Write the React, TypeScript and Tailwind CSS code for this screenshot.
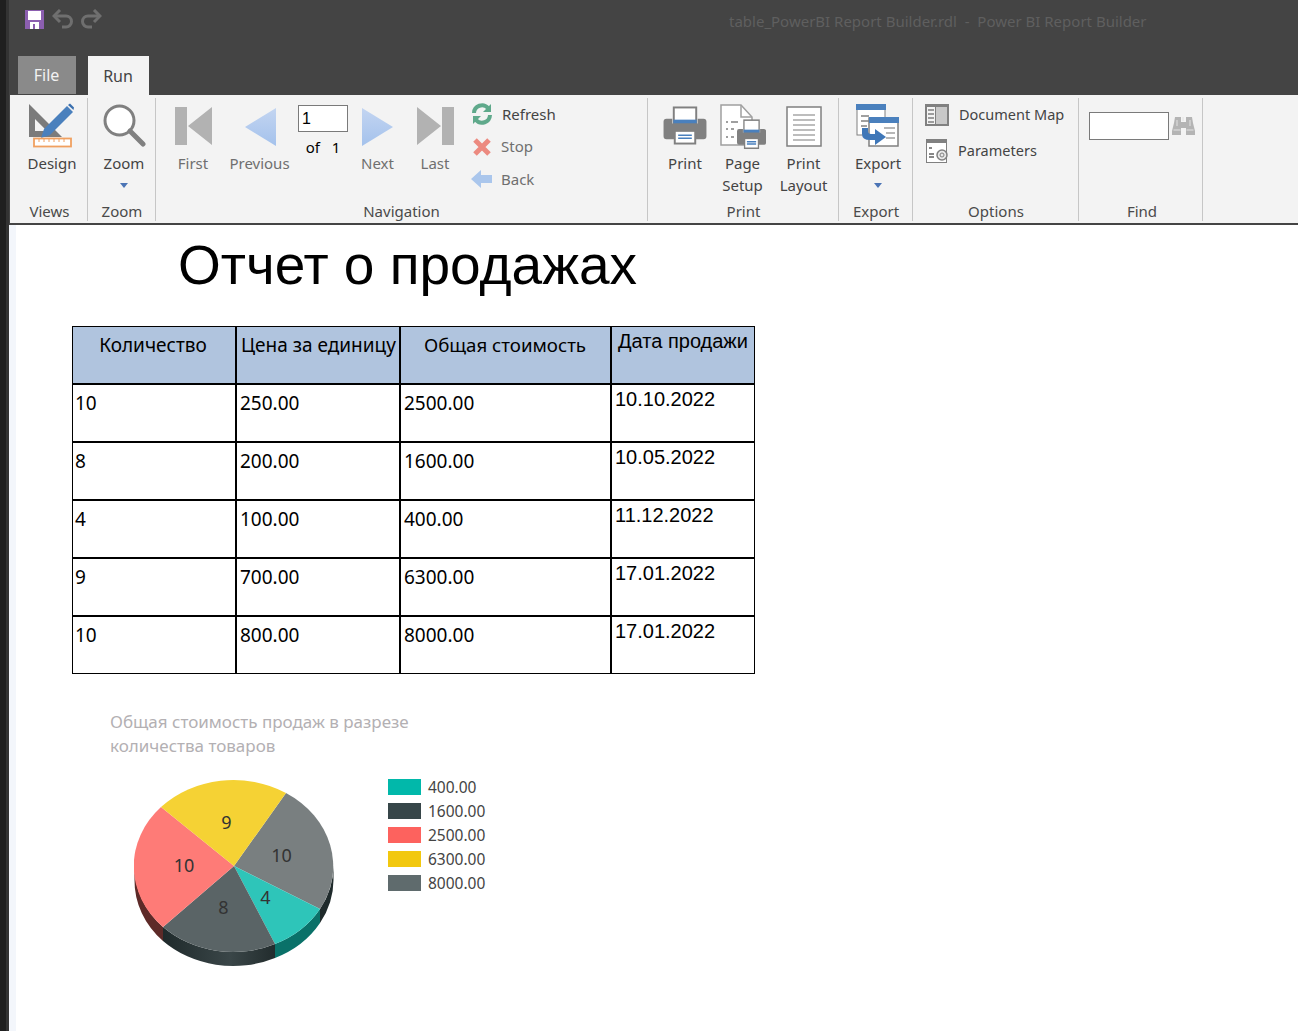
import React from "react";

const seg = { fontFamily: '"Noto Sans", "Open Sans", sans-serif' };

function RibbonGroup({ w, label, labelCls, children }: { w: string; label: string; labelCls?: string; children?: React.ReactNode }) {
  return (
    <div className={`${w} shrink-0 flex flex-col border-r border-[#c6c6c6] mt-[3px] h-[123px]`}>
      <div className="flex-1 min-h-0 flex">{children}</div>
      <div className={`h-[20px] text-center text-[15px] leading-[20px] text-[#4a4a4a] ${labelCls ?? ""}`}>{label}</div>
    </div>
  );
}

function Big({ w, icon, label, arrow, dim, cls, mb }: { w: string; icon: React.ReactNode; label: React.ReactNode; arrow?: boolean; dim?: boolean; cls?: string; mb: string }) {
  return (
    <div className={`${w} shrink-0 flex flex-col items-center ${cls ?? ""}`}>
      <div className={`h-[54px] flex items-end justify-center ${mb}`}>{icon}</div>
      <div className={`text-center text-[15px] leading-[22px] ${dim ? "text-[#6f6f6f]" : "text-[#444444]"}`}>{label}</div>
      {arrow && <svg width="8" height="5" viewBox="0 0 8 5" className="mt-[9px]"><path d="M0 0h8L4 5z" fill="#4b74b5" /></svg>}
    </div>
  );
}

function Small({ icon, label, dim, gap = "gap-[8px]", cls = "text-[15px]" }: { icon: React.ReactNode; label: string; dim?: boolean; gap?: string; cls?: string }) {
  return (
    <div className={`flex items-center h-[22px] ${gap}`}>
      <div className="w-[22px] h-[22px] flex items-center justify-center">{icon}</div>
      <span className={`${cls} ${dim ? "text-[#6f6f6f]" : "text-[#444444]"}`}>{label}</span>
    </div>
  );
}

const DesignIcon = () => (
  <svg width="48" height="46" viewBox="0 0 48 46">
    <path d="M1 2L34 35H1z M7 17V29H19z" fill="#7b7b7b" fillRule="evenodd" />
    <path d="M13 36l3-9L39 4l6 6-23 23z" fill="#4a80bd" />
    <path d="M40 3l2-1.500 4 4-.5 2.500z" fill="#3a6fae" />
    <rect x="6" y="36.500" width="37" height="8" fill="#fff" stroke="#f0a060" strokeWidth="1.800" />
    <path d="M11 37v3M16 37v3M21 37v3M26 37v3M31 37v3M36 37v3" stroke="#f0a060" strokeWidth="1" />
  </svg>
);
const ZoomIcon = () => (
  <svg width="44" height="44" viewBox="0 0 44 44">
    <circle cx="17.500" cy="17.500" r="14.500" fill="#fff" stroke="#808080" strokeWidth="3" />
    <path d="M28 28l13 13" stroke="#808080" strokeWidth="5" strokeLinecap="round" />
  </svg>
);
const First = () => (
  <svg width="37" height="39" viewBox="0 0 37 39"><path d="M0 0h12v38H0z M13 19L37 0v38z" fill="#b2b2b2" /></svg>
);
const Last = () => (
  <svg width="37" height="39" viewBox="0 0 37 39"><path d="M25 0h12v38H25z M24 19L0 0v38z" fill="#b2b2b2" /></svg>
);
const Arrow = ({ flip }: { flip?: boolean }) => (
  <svg width="32" height="38" viewBox="0 0 32 38" style={{ transform: flip ? "scaleX(-1)" : undefined }}>
    <defs><linearGradient id={flip ? "ga" : "gb"} x1="0" y1="0" x2="0" y2="1"><stop offset="0" stopColor="#c3d5f1" /><stop offset="1" stopColor="#a4c2ec" /></linearGradient></defs>
    <path d="M0 0l31 19L0 38z" fill={`url(#${flip ? "ga" : "gb"})`} />
  </svg>
);
const Refresh = () => (
  <svg width="22" height="22" viewBox="0 0 22 22" fill="none">
    <path d="M3 10a8 8 0 0 1 14-5" stroke="#5fa98b" strokeWidth="4" />
    <path d="M20 1v8h-8z" fill="#5fa98b" />
    <path d="M19 12a8 8 0 0 1-14 5" stroke="#5fa98b" strokeWidth="4" />
    <path d="M2 21v-8h8z" fill="#5fa98b" />
  </svg>
);
const Stop = () => (
  <svg width="20" height="20" viewBox="0 0 20 20"><path d="M3 3l14 14M17 3L3 17" stroke="#ec8a80" strokeWidth="5" /></svg>
);
const Back = () => (
  <svg width="22" height="20" viewBox="0 0 22 20"><path d="M0 10L10 1v5h11v8H10v5z" fill="#aac6ec" /></svg>
);
const PrinterParts = ({ sw }: { sw: number }) => (
  <>
    <rect x="10.500" y="1.500" width="23" height="16" fill="#fff" stroke="#808080" strokeWidth="2" />
    <rect x="10" y="14" width="24" height="4" fill="#4a80bd" />
    <path d="M3 13h6v5h26v-5h6a3 3 0 0 1 3 3v15a3 3 0 0 1-3 3H3a3 3 0 0 1-3-3V16a3 3 0 0 1 3-3z" fill="#808080" />
    <rect x="11.500" y="25.500" width="21" height="13" fill="#fff" stroke="#808080" strokeWidth="2" />
    <path d="M15 30h14M15 33h14" stroke="#4a80bd" strokeWidth={sw} />
  </>
);
const PrintIcon = () => (
  <svg width="44" height="39" viewBox="0 0 44 40"><PrinterParts sw={1.500} /></svg>
);
const PageSetup = () => (
  <svg width="46" height="46" viewBox="0 0 46 46">
    <path d="M1 1h20l11 12v28H1z" fill="#fff" stroke="#a0a0a0" strokeWidth="1.500" />
    <path d="M21 1v12h11" fill="none" stroke="#a0a0a0" strokeWidth="1.500" />
    <path d="M6 18h2M11 18h7M6 25h2M11 25h3M6 33h2M11 33h3" stroke="#808080" strokeWidth="1.600" />
    <g transform="translate(17,15) scale(0.66,0.76)"><PrinterParts sw={2} /></g>
  </svg>
);
const Layout = () => (
  <svg width="36" height="41" viewBox="0 0 36 41">
    <rect x="1" y="1" width="34" height="39" fill="#fff" stroke="#808080" strokeWidth="1.500" />
    <path d="M7 9h22M7 14h22M7 19h22M7 24h22M7 29h22M7 34h22" stroke="#a8a8a8" strokeWidth="1.300" />
  </svg>
);
const ExportIcon = () => (
  <svg width="44" height="44" viewBox="0 0 44 44">
    <rect x="1" y="1" width="28" height="30" fill="#fff" stroke="#808080" strokeWidth="1" />
    <rect x="0" y="0" width="30" height="6" fill="#4a80bd" />
    <path d="M5 12h8M5 17h8M5 22h6" stroke="#a0a0a0" strokeWidth="2" />
    <rect x="13" y="14" width="29" height="28" fill="#fff" stroke="#808080" strokeWidth="1.500" />
    <rect x="13" y="13" width="30" height="6" fill="#4a80bd" />
    <path d="M28 24h11M30 29h9M30 34h9" stroke="#a0a0a0" strokeWidth="1.500" />
    <path d="M6 24v6q0 6 8 6h5v5l11-8-11-8v5h-4q-3 0-3-3v-3z" fill="#3f77b8" />
  </svg>
);
const DocMap = () => (
  <svg width="24" height="22" viewBox="0 0 24 22" className="shrink-0">
    <rect x="0" y="0" width="24" height="22" fill="#808080" />
    <rect x="11" y="3" width="11" height="17" fill="#c8c8c8" />
    <rect x="2" y="3" width="8" height="17" fill="#f3f3f3" />
    <path d="M3 6h6M3 10h6M3 14h6M3 18h6" stroke="#808080" strokeWidth="1.500" />
  </svg>
);
const Params = () => (
  <svg width="22" height="24" viewBox="0 0 22 24" className="shrink-0">
    <rect x="0.500" y="0.500" width="20" height="23" fill="#fff" stroke="#808080" />
    <rect x="0" y="0" width="21" height="4" fill="#808080" />
    <path d="M3 9h3M3 15h5M3 18h5" stroke="#606060" strokeWidth="1.300" />
    <circle cx="16" cy="16" r="5" fill="#e8e8e8" stroke="#808080" strokeWidth="1.500" />
    <circle cx="16" cy="16" r="2" fill="none" stroke="#808080" />
  </svg>
);
const Binoculars = () => (
  <svg width="23" height="20" viewBox="0 0 23 20">
    <path d="M3 1h6v5h5V1h6l1 6 2 8v4h-9v-7h-5v7H0v-4l2-8z" fill="#b4b4b4" />
    <path d="M11 1v4M1.500 14h7M14.500 14h7M5 4v6M18 4v6" stroke="#e2e2e2" strokeWidth="1" />
  </svg>
);

const headers = ["Количество", "Цена за единицу", "Общая стоимость"];
const rows = [
  ["10", "250.00", "2500.00", "10.10.2022"],
  ["8", "200.00", "1600.00", "10.05.2022"],
  ["4", "100.00", "400.00", "11.12.2022"],
  ["9", "700.00", "6300.00", "17.01.2022"],
  ["10", "800.00", "8000.00", "17.01.2022"],
];

const legend = [
  ["#01b8aa", "400.00"],
  ["#374649", "1600.00"],
  ["#fd625e", "2500.00"],
  ["#f2c80f", "6300.00"],
  ["#5f6b6d", "8000.00"],
];

function Pie() {
  const cx = 100, cy = 87;
  const P = (x: number, y: number) => `${x - 134},${y - 779}`;
  return (
    <svg width="204" height="190" viewBox="0 0 204 190" className="block">
      <defs>
        <linearGradient id="edge" x1="0" y1="0" x2="1" y2="0">
          <stop offset="0" stopColor="#1f2a2b" />
          <stop offset="0.600" stopColor="#3a4648" />
          <stop offset="1" stopColor="#222c2d" />
        </linearGradient>
      </defs>
      <path d="M0.500 87v14A99.500 86 0 0 0 29 162V148A99.500 86 0 0 1 0.500 87z" fill="#5d2a28" />
      <path d="M29 148v14A99.500 86 0 0 0 141 179V165A99.500 86 0 0 1 29 148z" fill="url(#edge)" />
      <path d="M141 165v14A99.500 86 0 0 0 186 144V130A99.500 86 0 0 1 141 165z" fill="#0a7169" />
      <path d="M186 130v14A99.500 86 0 0 0 199.500 101V87A99.500 86 0 0 1 186 130z" fill="#1f2a2b" />
      <path d={`M${cx} ${cy}L${P(286, 793)}A99.500 86 0 0 1 ${P(320, 909)}z`} fill="#797f80" />
      <path d={`M${cx} ${cy}L${P(320, 909)}A99.500 86 0 0 1 ${P(275, 944)}z`} fill="#2ec5b9" />
      <path d={`M${cx} ${cy}L${P(275, 944)}A99.500 86 0 0 1 ${P(163, 927)}z`} fill="#5a6466" />
      <path d={`M${cx} ${cy}L${P(163, 927)}A99.500 86 0 0 1 ${P(161, 807)}z`} fill="#fe7b77" />
      <path d={`M${cx} ${cy}L${P(161, 807)}A99.500 86 0 0 1 ${P(286, 793)}z`} fill="#f5d234" />
      <g fontFamily='"Noto Sans", sans-serif' fontSize="18" fill="#333" textAnchor="middle">
        <text x="92.500" y="50">9</text>
        <text x="147.500" y="83">10</text>
        <text x="50" y="93">10</text>
        <text x="89.500" y="135">8</text>
        <text x="131.500" y="125">4</text>
      </g>
    </svg>
  );
}

export default function App() {
  return (
    <div className="w-[1298px] h-[1031px] overflow-hidden flex bg-white" style={seg}>
      <div className="w-[6px] bg-[#1f1f1f] shrink-0" />
      <div className="w-[3px] bg-[#333333] shrink-0" />
      <div className="flex-1 min-w-0 flex flex-col">
        <div className="h-[95px] bg-[#444444] shrink-0 flex flex-col">
          <div className="h-[56px] flex items-start">
            <div className="flex items-start pl-[16px] pt-[9px]">
              <svg width="19" height="19" viewBox="0 0 19 19" className="mt-[1px]">
                <rect width="19" height="19" fill="#8c5fb0" />
                <rect x="3" y="1" width="13" height="9" fill="#fff" />
                <rect x="5" y="12" width="9" height="7" fill="#fff" />
                <rect x="8" y="14" width="2" height="5" fill="#8c5fb0" />
              </svg>
              <svg width="22" height="20" viewBox="0 0 22 20" fill="none" stroke="#6f6f6f" strokeWidth="3" className="ml-[8px]">
                <path d="M8 1L2 7l6 6" />
                <path d="M3 7h11a5.500 5.500 0 0 1 0 11h-4" />
              </svg>
              <svg width="22" height="20" viewBox="0 0 22 20" fill="none" stroke="#6f6f6f" strokeWidth="3" className="ml-[6px]">
                <path d="M14 1l6 6-6 6" />
                <path d="M19 7H8a5.500 5.500 0 0 0 0 11h4" />
              </svg>
            </div>
            <div className="ml-[627px] pt-[10px] text-[15px] text-[#5f5f5f] whitespace-pre">table_PowerBI Report Builder.rdl  -  Power BI Report Builder</div>
          </div>
          <div className="flex pl-[9px] gap-[12px]">
            <div className="w-[58px] h-[38px] bg-[#8a8a8a] text-[#f2f2f2] text-[16px] flex items-center justify-center pr-[1px]">File</div>
            <div className="w-[61px] h-[39px] bg-[#f3f3f3] text-[#444] text-[16px] flex items-center justify-center pr-[1px]">Run</div>
          </div>
        </div>

        <div className="h-[130px] shrink-0 bg-[#f3f3f3] border-b-2 border-[#444444] border-l border-l-[#444444] flex items-start">
          <RibbonGroup w="w-[78px]" label="Views" labelCls="pl-[2px]">
            <Big w="w-[78px]" icon={<DesignIcon />} label="Design" cls="pl-[6px]" mb="pb-[4px]" />
          </RibbonGroup>
          <RibbonGroup w="w-[68px]" label="Zoom" labelCls="pl-[1px]">
            <Big w="w-[68px]" icon={<ZoomIcon />} label="Zoom" arrow cls="pl-[4px]" mb="pb-[5px]" />
          </RibbonGroup>
          <RibbonGroup w="w-[492px]" label="Navigation">
            <div className="flex pl-[2px]">
              <Big w="w-[70px]" icon={<First />} label="First" dim mb="pb-[6px]" />
              <Big w="w-[63px]" icon={<Arrow flip />} label="Previous" dim mb="pb-[6px]" />
              <div className="w-[64px] shrink-0 flex flex-col items-center pt-[7px]">
                <input readOnly value="1" className="w-[50px] h-[27px] bg-white border border-[#7a7a7a] px-[3px] text-[16px] text-black outline-none" style={{ fontFamily: '"Liberation Sans", sans-serif' }} />
                <div className="text-[15px] leading-[20px] mt-[5px] text-black whitespace-pre">of   1</div>
              </div>
              <Big w="w-[45px]" icon={<Arrow />} label="Next" dim mb="pb-[6px]" />
              <Big w="w-[70px]" icon={<Last />} label="Last" dim mb="pb-[6px]" />
              <div className="flex flex-col gap-[10.500px] pt-[5px] pl-[1px]">
                <Small icon={<Refresh />} label="Refresh" gap="gap-[9px]" />
                <Small icon={<Stop />} label="Stop" dim />
                <Small icon={<Back />} label="Back" dim />
              </div>
            </div>
          </RibbonGroup>
          <RibbonGroup w="w-[191px]" label="Print" labelCls="pl-[1px]">
            <div className="flex pl-[15px]">
              <Big w="w-[44px]" icon={<PrintIcon />} label="Print" mb="pb-[7px]" />
              <Big w="w-[68px]" icon={<PageSetup />} label={<>Page<br />Setup</>} cls="pl-[3px]" mb="pb-[2px]" />
              <Big w="w-[57px]" icon={<Layout />} label={<>Print<br />Layout</>} mb="pb-[5px]" />
            </div>
          </RibbonGroup>
          <RibbonGroup w="w-[74px]" label="Export" labelCls="pl-[1px]">
            <Big w="w-[74px]" icon={<ExportIcon />} label="Export" arrow cls="pl-[4px]" mb="pb-[4px]" />
          </RibbonGroup>
          <RibbonGroup w="w-[166px]" label="Options" labelCls="pl-[1px]">
            <div className="flex flex-col gap-[14px] pt-[6px] pl-[13px]">
              <Small icon={<DocMap />} label="Document Map" gap="gap-[11px]" cls="text-[14.500px]" />
              <Small icon={<Params />} label="Parameters" gap="gap-[10px]" cls="text-[14.500px]" />
            </div>
          </RibbonGroup>
          <RibbonGroup w="w-[124px]" label="Find" labelCls="pl-[3px]">
            <div className="flex pl-[10px] pt-[14px] gap-[3px]">
              <div className="w-[80px] h-[28px] bg-white border border-[#7a7a7a]" />
              <div className="pt-[4px]"><Binoculars /></div>
            </div>
          </RibbonGroup>
        </div>

        <div className="flex-1 min-h-0 flex">
          <div className="w-[7px] bg-[#f3f6fb] shrink-0" />
          <div className="flex-1 min-w-0 pl-[56px] text-black">
            <h1 className="ml-[106px] h-[101px] pt-[6px] text-[55px] leading-[68px] font-normal whitespace-nowrap" style={{ fontFamily: '"Liberation Sans", sans-serif' }}>Отчет о продажах</h1>
            <table className="border-separate border-spacing-0 border-t border-l border-black table-fixed w-[682px]">
              <colgroup>
                <col className="w-[164px]" />
                <col className="w-[164px]" />
                <col className="w-[211px]" />
                <col className="w-[143px]" />
              </colgroup>
              <thead>
                <tr className="h-[58px] bg-[#b0c4de]">
                  <th className="border-r-2 border-b-2 border-black align-top font-normal text-[19px] leading-[26px] pt-[5px] whitespace-nowrap text-center pr-[2px]">{headers[0]}</th>
                  <th className="border-r-2 border-b-2 border-black align-top font-normal text-[19px] leading-[26px] pt-[5px] whitespace-nowrap text-left pl-[4px]">{headers[1]}</th>
                  <th className="border-r-2 border-b-2 border-black align-top font-normal text-[18.700px] leading-[26px] pt-[5px] whitespace-nowrap text-center pr-[1px]">{headers[2]}</th>
                  <th className="border-r border-b-2 border-black align-top font-normal text-[20px] leading-[26px] pt-[1px] text-center whitespace-nowrap" style={{ fontFamily: '"Liberation Sans", sans-serif' }}>Дата продажи</th>
                </tr>
              </thead>
              <tbody>
                {rows.map((r, ri) => (
                  <tr key={ri} className={ri === rows.length - 1 ? "h-[57px]" : "h-[58px]"}>
                    {r.slice(0, 3).map((c, i) => (
                      <td key={i} className={`border-r-2 border-black align-top text-[19px] leading-[26px] pt-[5px] ${i === 0 ? "pl-[2px]" : "pl-[3px]"} ${ri === rows.length - 1 ? "border-b" : "border-b-2"}`}>{c}</td>
                    ))}
                    <td className={`border-r border-black align-top text-[20px] leading-[26px] pt-[1px] pl-[3px] ${ri === rows.length - 1 ? "border-b" : "border-b-2"}`} style={{ fontFamily: '"Liberation Sans", sans-serif' }}>{r[3]}</td>
                  </tr>
                ))}
              </tbody>
            </table>
            <div className="ml-[38px] mt-[36px] text-[17px] leading-[24px] text-[#b3b0b3] w-[320px]">Общая стоимость продаж в разрезе количества товаров</div>
            <div className="flex ml-[62px] mt-[21px]">
              <Pie />
              <div className="ml-[50px] -mt-[1px] flex flex-col gap-[6px]">
                {legend.map(([c, t]) => (
                  <div key={t} className="flex items-center gap-[7px] h-[18px]">
                    <div className="w-[33px] h-[16px]" style={{ background: c }} />
                    <span className="text-[15.500px] text-[#444] relative top-[1px]">{t}</span>
                  </div>
                ))}
              </div>
            </div>
          </div>
        </div>
      </div>
    </div>
  );
}
